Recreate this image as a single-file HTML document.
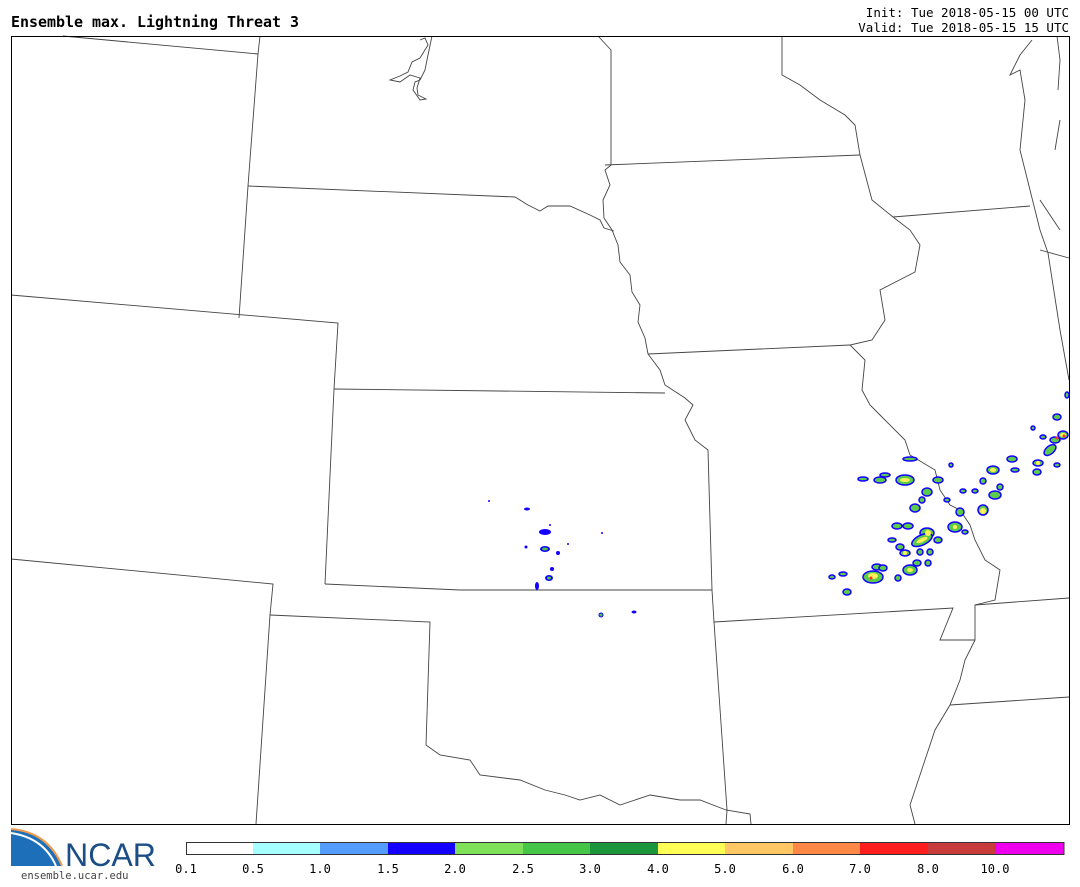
<!DOCTYPE html>
<html><head><meta charset="utf-8"><style>
body{margin:0;background:#fff;width:1080px;height:887px;overflow:hidden;font-family:"DejaVu Sans Mono","Liberation Mono",monospace;}
</style></head><body>
<svg width="1080" height="887" xmlns="http://www.w3.org/2000/svg" style="position:absolute;left:0;top:0">
<text x="11" y="27" font-family="DejaVu Sans Mono, monospace" font-weight="bold" font-size="15" textLength="288" lengthAdjust="spacingAndGlyphs">Ensemble max. Lightning Threat 3</text>
<text x="1069" y="17" text-anchor="end" font-family="DejaVu Sans Mono, monospace" font-size="12.5">Init: Tue 2018-05-15 00 UTC</text>
<text x="1069" y="32" text-anchor="end" font-family="DejaVu Sans Mono, monospace" font-size="12.5">Valid: Tue 2018-05-15 15 UTC</text>
<g fill="none" stroke="#444" stroke-width="0.9">
<polyline points="63,36 258,54"/>
<polyline points="260,36 258,54 248,186 239,318"/>
<polyline points="11,295 338,323 334,389 325,584"/>
<polyline points="248,186 515,197 528,205 540,211 548,206 570,206 590,215 600,220 604,228 614,231"/>
<polyline points="598,36 611,50 611,165 605,170 610,185 603,200 604,218 612,230 618,245 620,262 630,275 632,292 640,305 638,322 645,338 648,354 660,370 665,385 685,398 693,405 685,420 695,440 708,450 712,590 714,622 727,810 726,824"/>
<polyline points="605,165 860,155"/>
<polyline points="860,155 872,200 893,217 910,230 920,245 915,272 880,290 885,320 872,340 850,345 865,360 862,390 870,405 880,415 905,440 910,455 935,470 940,490 950,505 960,510 970,525 975,540 985,560 1000,570 995,600 975,605 975,620 975,640 965,660 960,680 950,705 935,730 925,760 915,790 910,805 915,824"/>
<polyline points="648,354 850,345"/>
<polyline points="334,389 665,393"/>
<polyline points="325,584 460,590 712,590"/>
<polyline points="11,559 273,584 270,615 256,824"/>
<polyline points="270,615 430,622 426,745 440,755 470,760 480,775 520,780 545,790 565,795 580,800 600,795 620,805 650,795 680,800 700,800 726,810 750,814 751,824"/>
<polyline points="714,622 953,608 940,640 975,640"/>
<polyline points="975,605 1069,598"/>
<polyline points="950,705 1069,697"/>
<polyline points="893,217 1030,206"/>
<polyline points="782,36 782,75 800,85 820,100 845,115 855,125 860,155"/>
<polyline points="1032,40 1020,55 1010,75 1020,70 1025,100 1020,150 1030,190 1040,230 1048,253 1060,330 1069,380"/>
<polyline points="1040,250 1069,258"/>
<polyline points="1057,36 1060,60 1058,90"/>
<polyline points="1060,120 1055,150"/>
<polyline points="1040,200 1060,230"/>
<polyline points="432,36 428,55 425,70 420,80 415,82 413,90 420,100 426,99 418,95 417,88 420,78 410,75 400,82 390,80 400,76 408,72 412,62 420,58 428,45 425,38 420,40"/>
</g>
<rect x="11.5" y="36.5" width="1058" height="788" fill="none" stroke="#000" stroke-width="1"/>
<g fill="#1400ff">
<ellipse cx="545" cy="532" rx="6" ry="3"/><ellipse cx="545" cy="549" rx="5" ry="3"/><ellipse cx="549" cy="578" rx="4" ry="3"/><ellipse cx="537" cy="586" rx="2" ry="4"/><ellipse cx="527" cy="509" rx="3" ry="1.5"/><ellipse cx="634" cy="612" rx="2.5" ry="1.5"/><ellipse cx="601" cy="615" rx="2.5" ry="2.5"/><circle cx="489" cy="501" r="1"/><circle cx="550" cy="525" r="1"/><circle cx="602" cy="533" r="1"/><circle cx="568" cy="544" r="1"/><circle cx="526" cy="547" r="1.5"/><circle cx="558" cy="553" r="2"/><circle cx="552" cy="569" r="2"/>
</g>
<g fill="#44c444"><ellipse cx="545" cy="549" rx="3" ry="1.5"/><ellipse cx="549" cy="578" rx="2" ry="1.5"/><circle cx="601" cy="615" r="1.5"/></g>
<g fill="#5bcc4a" stroke="#1400ff" stroke-width="1.5">
<ellipse cx="910" cy="459" rx="7" ry="2"/><ellipse cx="863" cy="479" rx="5" ry="2"/><ellipse cx="880" cy="480" rx="6" ry="3"/><ellipse cx="885" cy="475" rx="5" ry="2"/><ellipse cx="905" cy="480" rx="9" ry="5"/><ellipse cx="938" cy="480" rx="5" ry="3"/><ellipse cx="951" cy="465" rx="2" ry="2"/><ellipse cx="927" cy="492" rx="5" ry="4"/><ellipse cx="915" cy="508" rx="5" ry="4"/><ellipse cx="960" cy="512" rx="4" ry="4"/><ellipse cx="922" cy="500" rx="3" ry="3"/><ellipse cx="908" cy="526" rx="5" ry="3"/><ellipse cx="897" cy="526" rx="5" ry="3"/><ellipse cx="955" cy="527" rx="7" ry="5"/><ellipse cx="927" cy="533" rx="7" ry="5"/><ellipse cx="922" cy="540" rx="11" ry="5" transform="rotate(-25 922 540)"/><ellipse cx="938" cy="540" rx="4" ry="3"/><ellipse cx="892" cy="540" rx="4" ry="2"/><ellipse cx="900" cy="547" rx="4" ry="3"/><ellipse cx="905" cy="553" rx="5" ry="3"/><ellipse cx="920" cy="552" rx="3" ry="3"/><ellipse cx="930" cy="552" rx="3" ry="3"/><ellipse cx="877" cy="567" rx="5" ry="3"/><ellipse cx="883" cy="568" rx="4" ry="3"/><ellipse cx="910" cy="570" rx="7" ry="5"/><ellipse cx="917" cy="563" rx="4" ry="3"/><ellipse cx="873" cy="577" rx="10" ry="6"/><ellipse cx="843" cy="574" rx="4" ry="2"/><ellipse cx="832" cy="577" rx="3" ry="2"/><ellipse cx="847" cy="592" rx="4" ry="3"/><ellipse cx="898" cy="578" rx="3" ry="3"/><ellipse cx="928" cy="563" rx="3" ry="3"/><ellipse cx="965" cy="532" rx="3" ry="2"/><ellipse cx="983" cy="510" rx="5" ry="5"/><ellipse cx="995" cy="495" rx="6" ry="4"/><ellipse cx="1000" cy="487" rx="3" ry="3"/><ellipse cx="993" cy="470" rx="6" ry="4"/><ellipse cx="1012" cy="459" rx="5" ry="3"/><ellipse cx="1015" cy="470" rx="4" ry="2"/><ellipse cx="1037" cy="472" rx="4" ry="3"/><ellipse cx="1038" cy="463" rx="5" ry="3"/><ellipse cx="1057" cy="465" rx="3" ry="2"/><ellipse cx="1050" cy="450" rx="7" ry="4" transform="rotate(-40 1050 450)"/><ellipse cx="1055" cy="440" rx="5" ry="3"/><ellipse cx="1063" cy="435" rx="5" ry="4"/><ellipse cx="1043" cy="437" rx="3" ry="2"/><ellipse cx="1033" cy="428" rx="2" ry="2"/><ellipse cx="1057" cy="417" rx="4" ry="3"/><ellipse cx="983" cy="481" rx="3" ry="3"/><ellipse cx="963" cy="491" rx="3" ry="2"/><ellipse cx="975" cy="491" rx="3" ry="2"/><ellipse cx="947" cy="500" rx="3" ry="2"/><ellipse cx="1067" cy="395" rx="2" ry="3"/>
</g>
<g fill="#ffef5a">
<ellipse cx="905" cy="480" rx="5" ry="2"/><ellipse cx="922" cy="540" rx="6" ry="2" transform="rotate(-25 922 540)"/><ellipse cx="928" cy="533" rx="3" ry="3"/><ellipse cx="955" cy="527" rx="2" ry="2"/><ellipse cx="873" cy="576" rx="5" ry="3"/><ellipse cx="910" cy="570" rx="3" ry="2"/><ellipse cx="993" cy="470" rx="3" ry="2"/><ellipse cx="983" cy="511" rx="3" ry="3"/><ellipse cx="1038" cy="463" rx="2" ry="2"/><ellipse cx="1063" cy="435" rx="3" ry="2"/><ellipse cx="905" cy="553" rx="2" ry="2"/>
</g>
<g fill="#ff3030"><circle cx="871" cy="578" r="1.5"/><circle cx="1064" cy="436" r="1.5"/><circle cx="1057" cy="438" r="1.5"/></g>
<path d="M11,829 Q45,832 62,866 L11,866 Z" fill="#1c6fb8"/>
<path d="M11,829 Q48,832 62,866" fill="none" stroke="#f39a4a" stroke-width="2"/>
<path d="M11,833 Q44,838 56,866" fill="none" stroke="#fff" stroke-width="2"/>
<text x="65" y="866" font-family="Liberation Sans, sans-serif" font-size="32" fill="#1b4e86" textLength="91" lengthAdjust="spacingAndGlyphs">NCAR</text>
<text x="21" y="879" font-family="DejaVu Sans Mono, monospace" font-size="10.5" fill="#444">ensemble.ucar.edu</text>
<g>
<rect x="186" y="842" width="68" height="12" fill="#fff"/>
<rect x="253" y="842" width="68" height="12" fill="#a6ffff"/>
<rect x="320" y="842" width="68" height="12" fill="#559cff"/>
<rect x="388" y="842" width="68" height="12" fill="#1400ff"/>
<rect x="455" y="842" width="68" height="12" fill="#7fe05a"/>
<rect x="523" y="842" width="68" height="12" fill="#46c646"/>
<rect x="590" y="842" width="68" height="12" fill="#1c963c"/>
<rect x="658" y="842" width="68" height="12" fill="#ffff55"/>
<rect x="725" y="842" width="68" height="12" fill="#ffc864"/>
<rect x="793" y="842" width="68" height="12" fill="#ff8846"/>
<rect x="860" y="842" width="68" height="12" fill="#ff1e1e"/>
<rect x="928" y="842" width="68" height="12" fill="#c83c3c"/>
<rect x="995" y="842" width="69" height="12" fill="#ee00ee"/>
<rect x="186.5" y="842.5" width="877.5" height="12" fill="none" stroke="#333" stroke-width="1"/>
</g>
<g font-family="DejaVu Sans Mono, monospace" font-size="12" text-anchor="middle" fill="#000">
<text x="186" y="873">0.1</text><text x="253" y="873">0.5</text><text x="320" y="873">1.0</text><text x="388" y="873">1.5</text><text x="455" y="873">2.0</text><text x="523" y="873">2.5</text><text x="590" y="873">3.0</text><text x="658" y="873">4.0</text><text x="725" y="873">5.0</text><text x="793" y="873">6.0</text><text x="860" y="873">7.0</text><text x="928" y="873">8.0</text><text x="995" y="873">10.0</text>
</g>
</svg>
</body></html>
